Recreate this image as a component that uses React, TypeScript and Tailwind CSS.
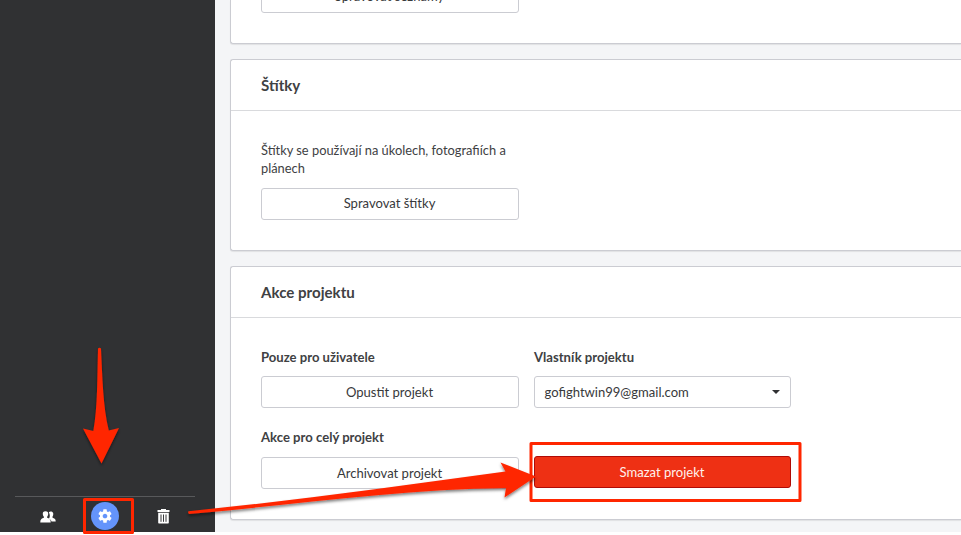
import type { ReactNode } from 'react';

const buttonBase =
  'flex h-8 w-full items-center justify-center rounded-[3px] border pr-px text-[13.05px] leading-[18px]';

function Button({
  children,
  danger = false,
  raised = false,
}: {
  children: ReactNode;
  danger?: boolean;
  raised?: boolean;
}) {
  return (
    <button
      className={`${buttonBase} ${raised ? 'pb-[3px]' : 'pb-px'} ${
        danger ? 'border-[#b00b06] bg-[#ee3014] text-[#fff0ec]' : 'border-[#cbccd2] bg-white text-[#38393b]'
      }`}
    >
      <span>{children}</span>
    </button>
  );
}

function Card({ title, className, children }: { title: string; className: string; children: ReactNode }) {
  return (
    <section
      className={`rounded-l-[3px] border border-r-0 border-[#cbccd2] bg-white shadow-[0_1px_1px_rgba(0,0,0,0.08)] ${className}`}
    >
      <h2 className="flex h-[51px] items-center border-b border-[#d9dadd] pl-[30px] text-[15.1px] font-bold text-[#404143]">
        {title}
      </h2>
      {children}
    </section>
  );
}

function Label({ children }: { children: ReactNode }) {
  return <h3 className="mb-2.5 h-[18px] text-[13.1px] leading-[18px] font-bold text-[#404143]">{children}</h3>;
}

function PeopleIcon() {
  return (
    <svg width="16" height="12" viewBox="0 0 16 12" fill="#fff">
      <path d="M8.8 1.2C10 .3 12.2.4 13 1.8c.5 1 .3 2.6-.3 3.5-.4.7-.3 1.5.4 1.8 1.6.6 2.6 1.2 2.6 3.3h-4.2c-.4-1.3-1.4-2-2.6-2.6 1-1.3 1.5-4.1-.1-6.6z" />
      <path d="M5.5.2c2.1 0 2.9 1.3 2.7 3-.1 1-.5 1.7-.9 2.2-.4.8-.1 1.4.5 1.7 1.9.7 2.9 1.5 2.9 4.4H.3c0-2.9 1-3.7 2.9-4.4.7-.3.9-1 .5-1.7-.5-.5-.8-1.2-.9-2.2-.2-1.7.6-3 2.7-3z" />
    </svg>
  );
}

function GearIcon() {
  return (
    <svg width="16" height="16" viewBox="0 0 24 24" fill="#fff">
      <path d="M19.43 12.98c.04-.32.07-.64.07-.98s-.03-.66-.07-.98l2.11-1.65c.19-.15.24-.42.12-.64l-2-3.46c-.12-.22-.39-.3-.61-.22l-2.49 1c-.52-.4-1.08-.73-1.69-.98l-.38-2.65A.488.488 0 0014 2h-4c-.25 0-.46.18-.49.42l-.38 2.65c-.61.25-1.17.59-1.69.98l-2.49-1c-.23-.09-.49 0-.61.22l-2 3.46c-.13.22-.07.49.12.64l2.11 1.65c-.04.32-.07.65-.07.98s.03.66.07.98l-2.11 1.65c-.19.15-.24.42-.12.64l2 3.46c.12.22.39.3.61.22l2.49-1c.52.4 1.08.73 1.69.98l.38 2.65c.03.24.24.42.49.42h4c.25 0 .46-.18.49-.42l.38-2.65c.61-.25 1.17-.59 1.69-.98l2.49 1c.23.09.49 0 .61-.22l2-3.46c.12-.22.07-.49-.12-.64l-2.11-1.65zM12 15.5c-1.93 0-3.5-1.57-3.5-3.5s1.57-3.5 3.5-3.5 3.5 1.57 3.5 3.5-1.57 3.5-3.5 3.5z" />
    </svg>
  );
}

function TrashIcon() {
  return (
    <svg width="13" height="15" viewBox="0 0 13 15">
      <path d="M4 0h5v1h3.5v2H.5V1H4z" fill="#fff" />
      <path d="M1.2 3.8h10.6v9.7c0 .6-.4 1-1 1H2.2c-.6 0-1-.4-1-1z" fill="#fff" />
      <path d="M4 5.5v7.3M6.5 5.5v7.3M9 5.5v7.3" stroke="#38393b" strokeWidth="1" />
    </svg>
  );
}

function Annotations() {
  return (
    <svg className="pointer-events-none absolute top-0 left-0" width="961" height="535">
      <defs>
        <filter id="drop" x="-10%" y="-20%" width="120%" height="150%">
          <feDropShadow dx="0" dy="2" stdDeviation="1.5" floodColor="#000" floodOpacity="0.5" />
        </filter>
      </defs>
      <rect x="84.5" y="499.5" width="48" height="33" fill="none" stroke="#ff2600" strokeWidth="3" strokeLinejoin="round" />
      <rect x="531" y="443.5" width="269" height="57" fill="none" stroke="#ff2600" strokeWidth="3" strokeLinejoin="round" />
      <g fill="#ff2600" filter="url(#drop)">
        <path d="M98 348.500q1.500-1.500 3 0C102.300 376 103 407 108.800 430.500L119 428L101.500 463.500L83 428.500L93.300 431C97.800 406 97.200 376 98 348.500Z" />
        <path d="M188.500 511.200C293 501 400 486 505.500 471.500L500.500 462.500L536 476.500L504.500 497.500L506 488C400 489 294 505 189 514Q187.500 512.500 188.500 511.200Z" />
      </g>
    </svg>
  );
}

export default function App() {
  return (
    <div
      className="relative h-[535px] w-[961px] overflow-hidden bg-white"
      style={{ fontFamily: 'Lato, "Liberation Sans", sans-serif' }}
    >
      <div className="flex h-[532px] bg-[#f4f5f7]">
        <aside className="flex w-[215px] shrink-0 flex-col justify-end bg-[#303133] px-[15px]">
          <nav className="flex h-9 w-[180px] items-center border-t border-[#58595b] pt-[3px]">
            <span className="ml-[24.5px] pt-px">
              <PeopleIcon />
            </span>
            <span className="ml-[35.5px] flex size-7 items-center justify-center rounded-full bg-[#6494fb]">
              <GearIcon />
            </span>
            <span className="ml-[37.5px]">
              <TrashIcon />
            </span>
          </nav>
        </aside>

        <main className="flex min-w-0 flex-1 flex-col pl-[15px]">
          <section className="h-11 shrink-0 overflow-hidden rounded-bl-[3px] border-b border-l border-[#cbccd2] bg-white shadow-[0_1px_1px_rgba(0,0,0,0.08)]">
            <div className="-mt-[19px] ml-[30px] w-[258px]">
              <Button raised>Spravovat seznamy</Button>
            </div>
          </section>

          <Card title="Štítky" className="mt-[15px] h-48 shrink-0">
            <div className="ml-[30px] w-[258px] pt-[30px]">
              <p className="mb-[11px] text-[12.85px] leading-[18px] text-[#404143]">
                Štítky se používají na úkolech, fotografiích a plánech
              </p>
              <Button raised>Spravovat štítky</Button>
            </div>
          </Card>

          <Card title="Akce projektu" className="mt-[15px] h-[254px] shrink-0">
            <div className="ml-[30px] grid grid-cols-[258px_257px] gap-x-[15px] pt-[30px]">
              <div>
                <Label>Pouze pro uživatele</Label>
                <Button>Opustit projekt</Button>
              </div>
              <div>
                <Label>Vlastník projektu</Label>
                <div className="flex h-8 items-center justify-between rounded-[3px] border border-[#cbccd2] pr-[10px] pb-px pl-[9.5px] text-[13.05px] leading-[18px] text-[#38393b]">
                  <span>gofightwin99@gmail.com</span>
                  <span className="border-x-4 border-t-4 border-x-transparent border-t-[#303133]" />
                </div>
              </div>
              <div className="pt-5">
                <Label>Akce pro celý projekt</Label>
                <div className="mt-[11px]">
                  <Button>Archivovat projekt</Button>
                </div>
              </div>
              <div className="pt-12">
                <Button danger>Smazat projekt</Button>
              </div>
            </div>
          </Card>
        </main>
      </div>
      <Annotations />
    </div>
  );
}
